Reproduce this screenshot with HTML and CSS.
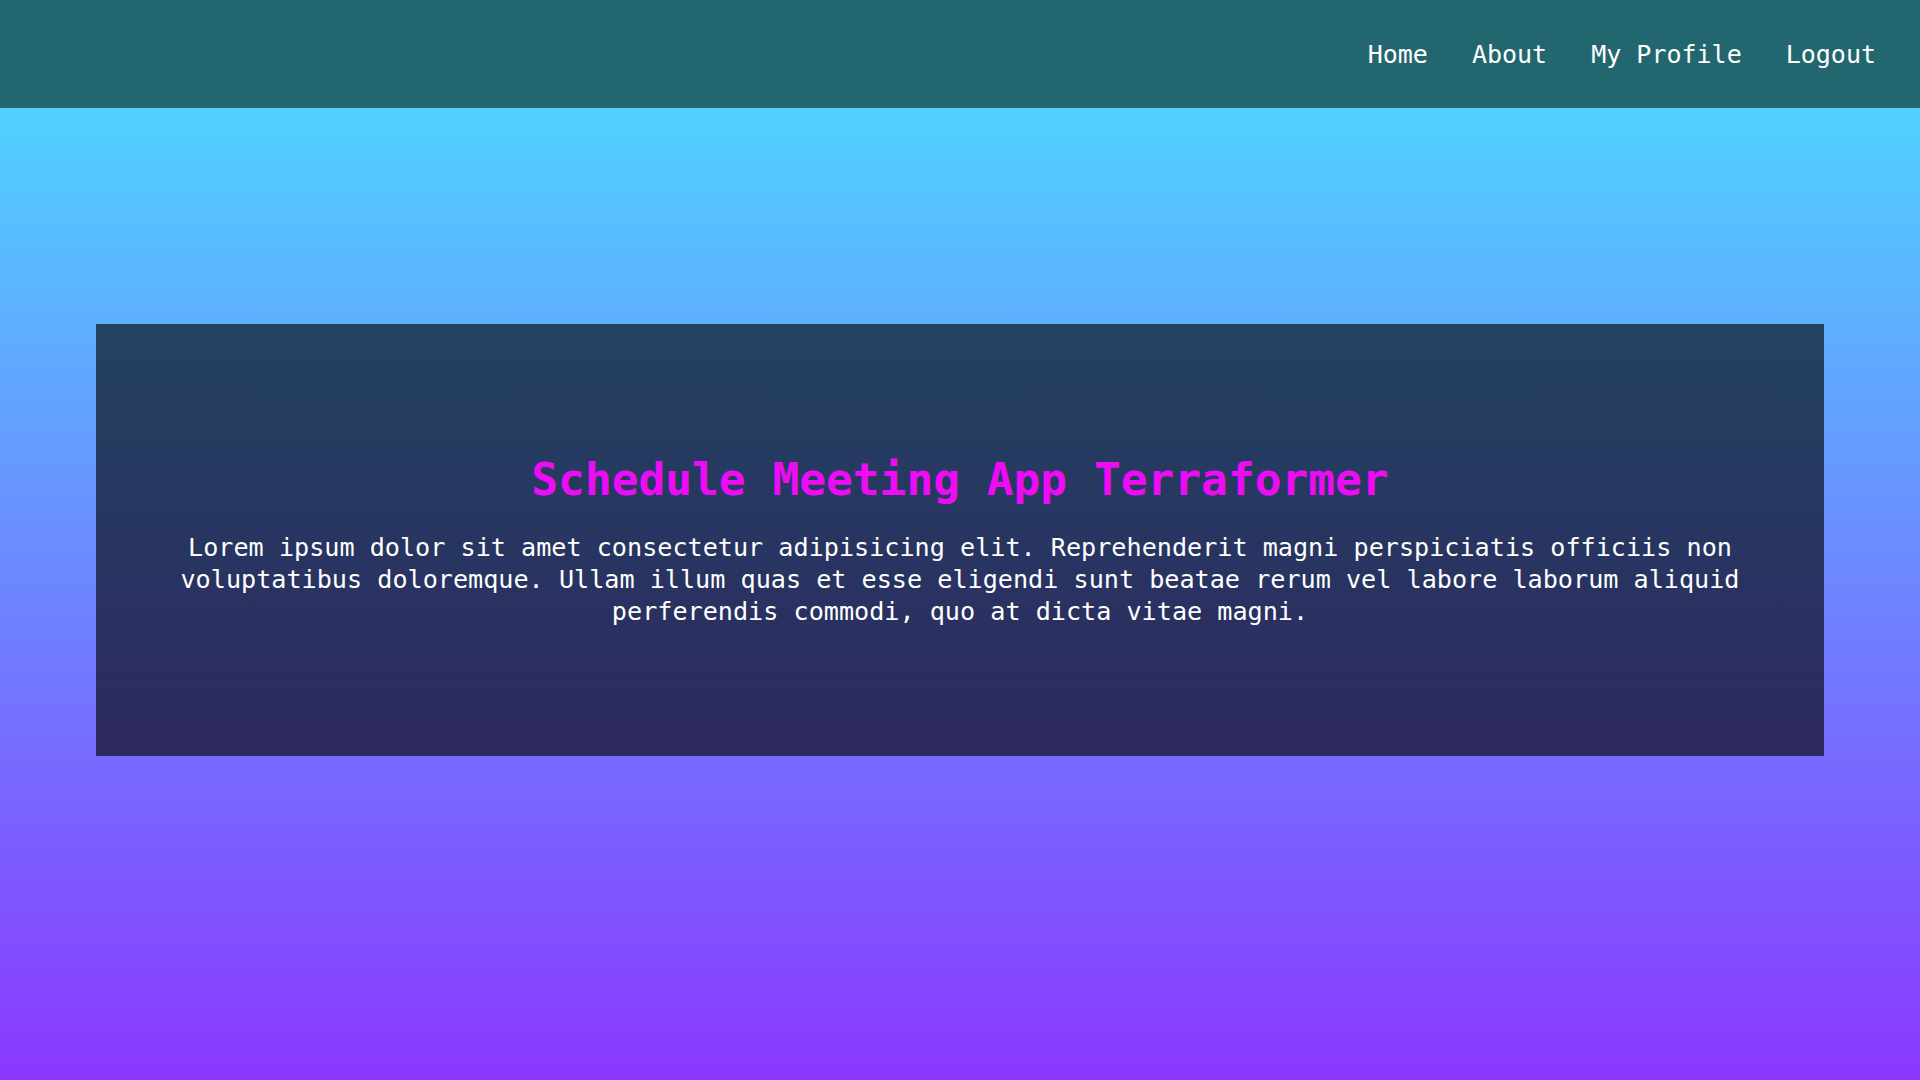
FILE: index.html
```html
<!DOCTYPE html>
<html lang="en">
<head>
<meta charset="utf-8">
<title>Schedule Meeting App Terraformer</title>
<link rel="stylesheet" href="styles.css">
</head>
<body>
<header class="topbar">
  <nav class="nav">
    <a class="nav-link" href="#">Home</a>
    <a class="nav-link" href="#">About</a>
    <a class="nav-link" href="#">My Profile</a>
    <a class="nav-link" href="#">Logout</a>
  </nav>
</header>
<main class="main">
  <section class="card">
    <h1 class="title">Schedule Meeting App Terraformer</h1>
    <p class="text">Lorem ipsum dolor sit amet consectetur adipisicing elit. Reprehenderit magni perspiciatis officiis non voluptatibus doloremque. Ullam illum quas et esse eligendi sunt beatae rerum vel labore laborum aliquid perferendis commodi, quo at dicta vitae magni.</p>
  </section>
</main>
</body>
</html>
```
FILE: styles.css
```css
* { box-sizing: border-box; }
html, body { margin: 0; padding: 0; }
body {
  min-height: 1080px;
  font-family: "DejaVu Sans Mono", "Liberation Mono", monospace;
  background: linear-gradient(to bottom, #4ae2ff 0%, #8a38ff 100%);
  color: #fff;
  display: flex;
  flex-direction: column;
}
.topbar {
  height: 108px;
  background: #22676f;
  display: flex;
  align-items: center;
  justify-content: flex-end;
  padding: 0 44px 0 0;
}
.nav {
  display: flex;
  gap: 44px;
  align-items: center;
}
.nav-link {
  color: #fff;
  text-decoration: none;
  font-size: 25px;
  line-height: 32px;
  padding-top: 2px;
}
.main {
  flex: 1;
  padding: 216px 96px 0;
}
.card {
  height: 432px;
  background: rgba(0, 0, 0, 0.62);
  display: flex;
  flex-direction: column;
  align-items: center;
  justify-content: center;
  padding: 0 80px;
  text-align: center;
}
.title {
  margin: 0;
  color: #ee0cf6;
  font-size: 44.5px;
  line-height: 56px;
  font-weight: bold;
}
.text {
  margin: 24px 0 0;
  font-size: 25.15px;
  line-height: 32px;
}
```
